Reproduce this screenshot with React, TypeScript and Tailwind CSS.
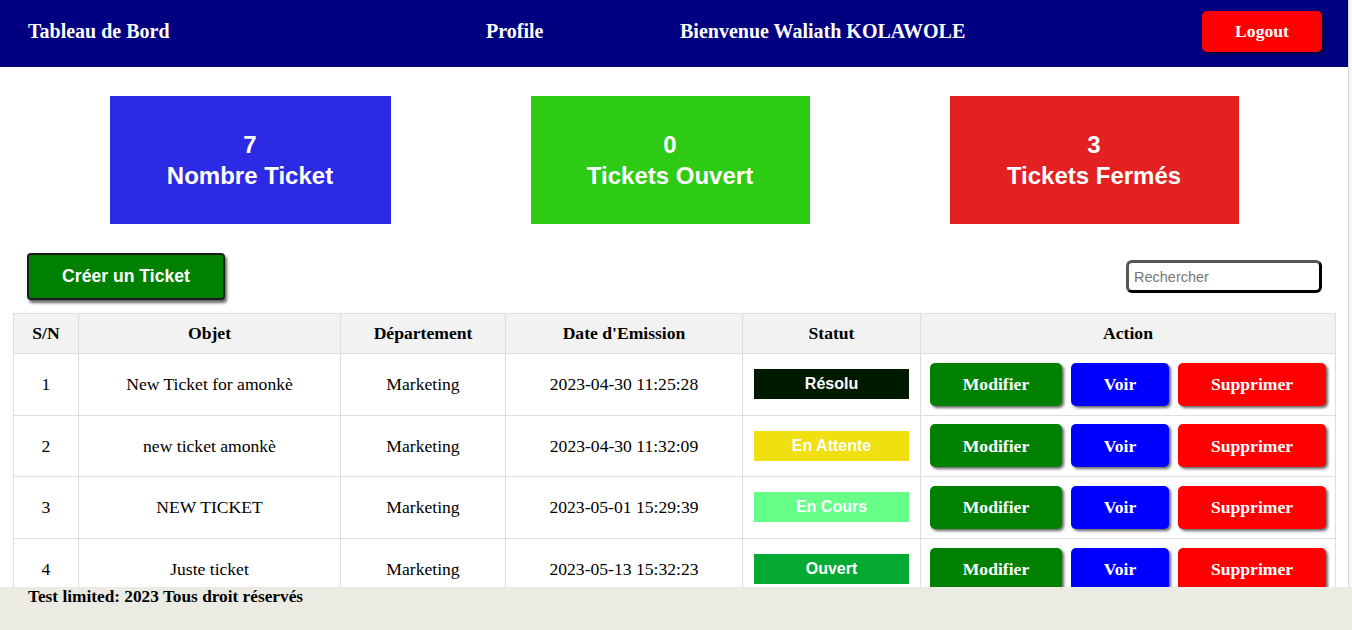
import React from "react";

const serif = { fontFamily: '"Liberation Serif", "Times New Roman", serif' };

type Row = { sn: number; objet: string; dep: string; date: string; statut: string };

const rows: Row[] = [
  { sn: 1, objet: "New Ticket for amonkè", dep: "Marketing", date: "2023-04-30 11:25:28", statut: "Résolu" },
  { sn: 2, objet: "new ticket amonkè", dep: "Marketing", date: "2023-04-30 11:32:09", statut: "En Attente" },
  { sn: 3, objet: "NEW TICKET", dep: "Marketing", date: "2023-05-01 15:29:39", statut: "En Cours" },
  { sn: 4, objet: "Juste ticket", dep: "Marketing", date: "2023-05-13 15:32:23", statut: "Ouvert" },
];

function Badge({ statut }: { statut: string }) {
  let cls = "bg-[#001a00]";
  if (statut === "En Attente") cls = "bg-[#f1e00f]";
  else if (statut === "En Cours") cls = "bg-[#66ff88]";
  else if (statut === "Ouvert") cls = "bg-[#05aa33]";
  return (
    <div
      className={`mx-auto flex h-[30px] w-[155px] items-center justify-center text-[16px] font-bold text-white ${cls}`}
      style={{ fontFamily: '"Liberation Sans", Arial, sans-serif' }}
    >
      {statut}
    </div>
  );
}

export default function App() {
  return (
    <div className="relative flex h-[630px] w-[1352px] overflow-hidden bg-white" style={serif}>
      <div className="w-[1348px] shrink-0">
        {/* Header */}
        <header className="flex h-[67px] items-center bg-[#000080] pb-[5px] pl-[28px] pr-[26px] text-[20px] font-bold text-white">
          <div className="w-[458px]">Tableau de Bord</div>
          <div className="w-[194px]">Profile</div>
          <div>Bienvenue Waliath KOLAWOLE</div>
          <button className="ml-auto h-[41px] w-[120px] rounded-[5px] bg-[#ff0000] text-[17.6px] font-bold text-white shadow-[2px_2px_3px_rgba(0,0,0,0.55)]">
            Logout
          </button>
        </header>

        {/* Cards */}
        <div
          className="mt-[29px] flex justify-center gap-[140px] text-[24px] font-bold leading-[31px] text-white"
          style={{ fontFamily: '"Liberation Sans", Arial, sans-serif' }}
        >
          <div className="flex h-[128px] w-[281px] flex-col items-center justify-center bg-[#2d2ae6]">
            <div>7</div>
            <div>Nombre Ticket</div>
          </div>
          <div className="flex h-[128px] w-[279px] flex-col items-center justify-center bg-[#2dcb13]">
            <div>0</div>
            <div>Tickets Ouvert</div>
          </div>
          <div className="flex h-[128px] w-[289px] flex-col items-center justify-center bg-[#e32022]">
            <div>3</div>
            <div>Tickets Fermés</div>
          </div>
        </div>

        {/* Toolbar */}
        <div className="mt-[29px] flex items-center pl-[27px] pr-[26px]">
          <button
            className="h-[47px] w-[198px] rounded-[4px] border-2 border-[#1a1a1a] bg-[#008000] text-[17.6px] font-bold text-white shadow-[2px_3px_3px_rgba(0,0,0,0.6)]"
            style={{ fontFamily: '"Liberation Sans", Arial, sans-serif' }}
          >
            Créer un Ticket
          </button>
          <input
            placeholder="Rechercher"
            className="ml-auto h-[33px] w-[196px] rounded-[6px] border-[3px] border-black border-l-[#555] border-t-[#555] px-[5px] text-[14.5px] text-black outline-none placeholder:text-[#777]"
            style={{ fontFamily: '"Liberation Sans", Arial, sans-serif' }}
          />
        </div>

        {/* Table */}
        <div className="mx-[13px] mt-[13px]">
          <table className="w-[1322px] table-fixed border-collapse text-[17.6px] text-black">
            <thead>
              <tr className="h-[40px] bg-[#f2f2f2]">
                <th className="w-[65px] border border-[#dddddd] font-bold">S/N</th>
                <th className="w-[262px] border border-[#dddddd] font-bold">Objet</th>
                <th className="w-[165px] border border-[#dddddd] font-bold">Département</th>
                <th className="w-[237px] border border-[#dddddd] font-bold">Date d'Emission</th>
                <th className="w-[178px] border border-[#dddddd] font-bold">Statut</th>
                <th className="w-[415px] border border-[#dddddd] font-bold">Action</th>
              </tr>
            </thead>
            <tbody>
              {rows.map((r) => (
                <tr key={r.sn} className="h-[61.6px]">
                  <td className="border border-[#dddddd] text-center">{r.sn}</td>
                  <td className="border border-[#dddddd] text-center">{r.objet}</td>
                  <td className="border border-[#dddddd] text-center">{r.dep}</td>
                  <td className="border border-[#dddddd] text-center">{r.date}</td>
                  <td className="border border-[#dddddd] text-center">
                    <Badge statut={r.statut} />
                  </td>
                  <td className="border border-[#dddddd]">
                    <div className="flex justify-center gap-[9px] text-[17.6px] font-bold text-white">
                      <button className="h-[43px] w-[132px] rounded-[5px] bg-[#008000] font-bold shadow-[2px_2px_3px_rgba(0,0,0,0.6)]">
                        Modifier
                      </button>
                      <button className="h-[43px] w-[98px] rounded-[5px] bg-[#0000ff] font-bold shadow-[2px_2px_3px_rgba(0,0,0,0.6)]">
                        Voir
                      </button>
                      <button className="h-[43px] w-[148px] rounded-[5px] bg-[#ff0000] font-bold shadow-[2px_2px_3px_rgba(0,0,0,0.6)]">
                        Supprimer
                      </button>
                    </div>
                  </td>
                </tr>
              ))}
            </tbody>
          </table>
        </div>
      </div>

      {/* Scrollbar strip */}
      <div className="w-[4px] shrink-0 border-l border-[#d4d4d4] bg-[#f7f7f7]" />

      {/* Footer */}
      <footer className="absolute bottom-0 left-0 right-0 h-[43px] bg-[#ebebe4] pl-[28px] text-[17.3px] font-bold leading-[20px] text-black">
        Test limited: 2023 Tous droit réservés
      </footer>
    </div>
  );
}
